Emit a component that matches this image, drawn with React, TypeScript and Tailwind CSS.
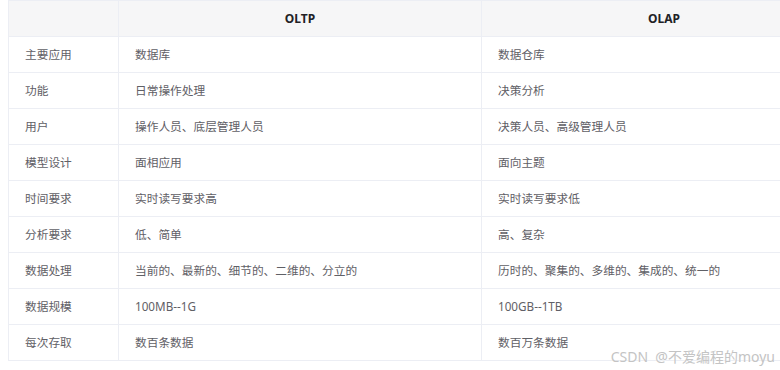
import React from "react";

const rows: [string, string, string][] = [
  ["主要应用", "数据库", "数据仓库"],
  ["功能", "日常操作处理", "决策分析"],
  ["用户", "操作人员、底层管理人员", "决策人员、高级管理人员"],
  ["模型设计", "面相应用", "面向主题"],
  ["时间要求", "实时读写要求高", "实时读写要求低"],
  ["分析要求", "低、简单", "高、复杂"],
  ["数据处理", "当前的、最新的、细节的、二维的、分立的", "历时的、聚集的、多维的、集成的、统一的"],
  ["数据规模", "100MB--1G", "100GB--1TB"],
  ["每次存取", "数百条数据", "数百万条数据"],
];

const App = () => {
  return (
    <div
      className="relative w-[780px] h-[370px] overflow-hidden bg-white pl-2"
      style={{ fontFamily: '"Noto Sans", "Noto Sans CJK SC", sans-serif' }}>
      <table className="w-[838px] border-collapse table-fixed text-[11.7px] text-[#5f6066]">
        <colgroup>
          <col className="w-[110px]" />
          <col className="w-[363px]" />
          <col className="w-[365px]" />
        </colgroup>
        <thead>
          <tr className="bg-[#f6f6f7]">
            <th className="h-[36px] border border-[#eceef4]"></th>
            <th className="h-[36px] border border-[#eceef4] font-bold text-[12px] text-[#222226] text-center">
              OLTP
            </th>
            <th className="h-[36px] border border-[#eceef4] font-bold text-[12px] text-[#222226] text-center">
              OLAP
            </th>
          </tr>
        </thead>
        <tbody>
          {rows.map((r, index) => (
            <tr key={index}>
              {r.map((c, i) => (
                <td
                  key={i}
                  className="h-[36px] border border-[#eceef4] px-4 whitespace-nowrap">
                  {c}
                </td>
              ))}
            </tr>
          ))}
        </tbody>
      </table>
      {/* watermark */}
      <div className="absolute right-[5px] top-[346px] text-[14px] text-[#c4c4c4] [text-shadow:0_0_2px_#fff] whitespace-nowrap">
        CSDN&nbsp; @不爱编程的moyu
      </div>
    </div>
  );
};

export default App;
